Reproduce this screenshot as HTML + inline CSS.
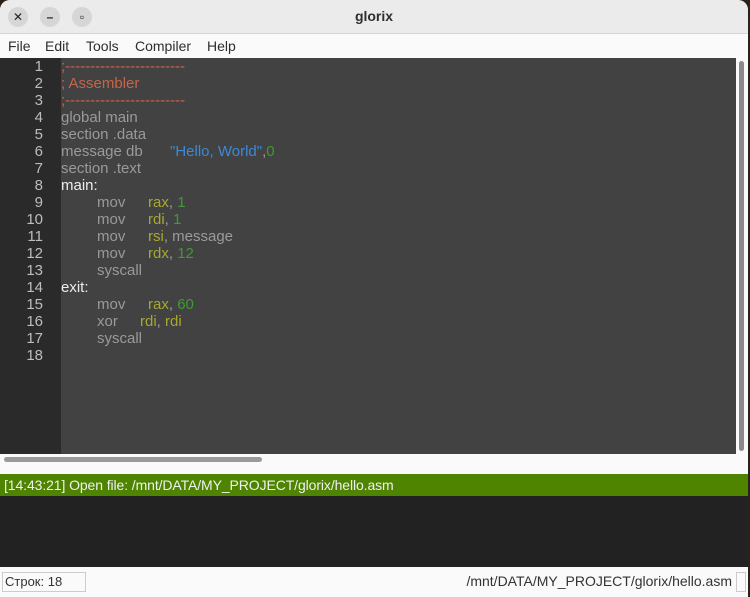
<!DOCTYPE html>
<html><head><style>
body{margin:0;width:750px;height:597px;background:#2b2118;overflow:hidden;font-family:"Liberation Sans","DejaVu Sans",sans-serif;}
.win{position:absolute;left:0;top:0;width:748px;height:597px;background:#fafafa;border-radius:10px 10px 0 0;overflow:hidden}
.title{position:absolute;left:0;top:0;width:748px;height:33px;background:#ebebeb;border-bottom:1px solid #d6d6d6}
.title .t{position:absolute;left:0;right:0;top:8px;text-align:center;font-weight:bold;font-size:14px;color:#2e2e2e}
.btn{position:absolute;top:7px;width:20px;height:20px;border-radius:50%;background:#d6d6d6;font-size:12px;text-align:center;line-height:20px;color:#222;font-weight:bold}
.menu{position:absolute;top:34px;left:0;width:748px;height:24px;background:#fafafa;font-size:14px;color:#2e2e2e}
.menu span{position:absolute;top:4px}
.ed{position:absolute;top:58px;left:0;width:736px;height:396px;background:#424242}
.gut{position:absolute;top:58px;left:0;width:61px;height:396px;background:#2a2a2a}
.ln{position:absolute;left:0;width:43px;text-align:right;font-size:15px;color:#bdbdbd;line-height:17px}
.code{position:absolute;left:61px;font-size:15px;line-height:17px;white-space:pre;color:#9a9a9a}
.c{color:#c8644a}.w{color:#ececec}.s{color:#3c8ad6}.n{color:#3e9a32}.r{color:#a8a830}
.i{display:inline-block;width:36px}.m{display:inline-block;width:51px}.x{display:inline-block;width:43px}.d{display:inline-block;width:109px}
.vs{position:absolute;left:736px;top:58px;width:12px;height:396px;background:#fafafa}
.vs div{position:absolute;left:3px;top:3px;width:5px;height:390px;border-radius:3px;background:#8a8a8a}
.hs{position:absolute;left:4px;top:457px;width:258px;height:5px;border-radius:3px;background:#9a9a9a}
.log{position:absolute;top:474px;left:0;width:748px;height:22px;background:#4e8400;color:#f0f0f0;font-size:14px;line-height:22px;padding-left:4px;box-sizing:border-box;letter-spacing:-0.1px}
.con{position:absolute;top:496px;left:0;width:748px;height:71px;background:#222}
.st{position:absolute;top:567px;left:0;width:748px;height:30px;background:#fafafa;font-size:14px;color:#333}
</style></head><body><div class="win">
<div class="title"><div class="btn" style="left:8px">✕</div><div class="btn" style="left:40px">–</div><div class="btn" style="left:72px">▫</div><div class="t">glorix</div></div>
<div class="menu"><span style="left:8px">File</span><span style="left:45px">Edit</span><span style="left:86px">Tools</span><span style="left:135px">Compiler</span><span style="left:207px">Help</span></div>
<div class="ed"></div><div class="gut"></div>
<div class="ln" style="top:58px">1<br>2<br>3<br>4<br>5<br>6<br>7<br>8<br>9<br>10<br>11<br>12<br>13<br>14<br>15<br>16<br>17<br>18</div>
<div class="code" style="top:58px"><span class="c">;------------------------</span>
<span class="c">; Assembler</span>
<span class="c">;------------------------</span>
global main
section .data
<span class="d">message db</span><span class="s">"Hello, World"</span>,<span class="n">0</span>
section .text
<span class="w">main:</span>
<span class="i"></span><span class="m">mov</span><span class="r">rax</span>, <span class="n">1</span>
<span class="i"></span><span class="m">mov</span><span class="r">rdi</span>, <span class="n">1</span>
<span class="i"></span><span class="m">mov</span><span class="r">rsi</span>, message
<span class="i"></span><span class="m">mov</span><span class="r">rdx</span>, <span class="n">12</span>
<span class="i"></span>syscall
<span class="w">exit:</span>
<span class="i"></span><span class="m">mov</span><span class="r">rax</span>, <span class="n">60</span>
<span class="i"></span><span class="x">xor</span><span class="r">rdi</span>, <span class="r">rdi</span>
<span class="i"></span>syscall
</div>
<div class="vs"><div></div></div>
<div class="hs"></div>
<div class="log">[14:43:21] Open file: /mnt/DATA/MY_PROJECT/glorix/hello.asm</div>
<div class="con"></div>
<div class="st"><div style="position:absolute;left:2px;top:5px;width:84px;height:20px;border:1px solid #ccc;box-sizing:border-box;padding-left:2px;line-height:18px;font-size:13px">Строк: 18</div><div style="position:absolute;right:16px;top:6px">/mnt/DATA/MY_PROJECT/glorix/hello.asm</div><div style="position:absolute;right:2px;top:5px;width:10px;height:20px;border:1px solid #ccc;box-sizing:border-box"></div></div>
</div></body></html>
